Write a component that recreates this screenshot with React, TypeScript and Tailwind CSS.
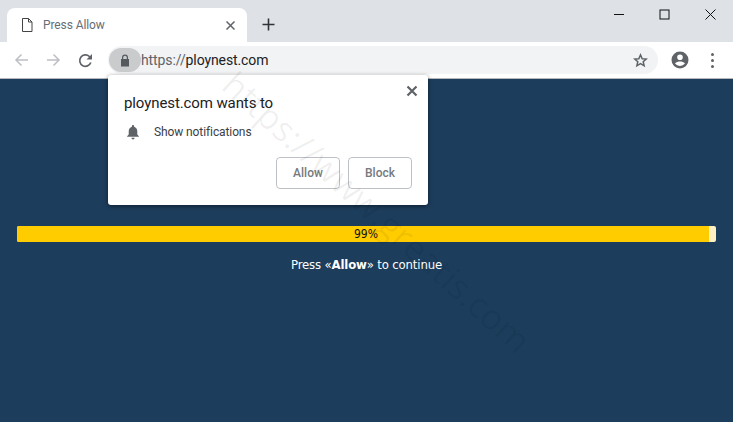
const bodyFont = 'font-["DejaVu_Sans_Condensed","DejaVu_Sans",sans-serif]';

const WinControls = () => (
  <div className="flex items-center gap-[35px] pr-[17px] pt-[8px] ml-auto self-start">
    <svg width="10" height="12" viewBox="0 0 10 12"><path d="M0 6.500h10" stroke="#111" strokeWidth="1" /></svg>
    <svg width="11" height="11" viewBox="0 0 11 11"><rect x="1" y="1" width="9" height="9" fill="none" stroke="#111" strokeWidth="1" /></svg>
    <svg width="11" height="11" viewBox="0 0 11 11"><path d="M.5.5l10 10M10.500.5l-10 10" stroke="#111" strokeWidth="1" /></svg>
  </div>
);

const Tab = () => (
  <div className="w-[240px] h-[34px] mt-[8px] ml-[7px] bg-white rounded-t-[8px] flex items-center pl-[14px] pr-[12px]">
    <svg width="12" height="14" viewBox="0 0 12 14" fill="none" stroke="#444" strokeWidth="1">
      <path d="M1.500.5h6l3.500 3.500v9.500h-9.500zM7.500.5v3.500h3.500" />
    </svg>
    <span className="ml-[10px] text-[12px] tracking-[-0.1px] text-[#666d75] font-['Roboto',sans-serif]">Press Allow</span>
    <svg className="ml-auto" width="9" height="9" viewBox="0 0 9 9"><path d="M.5.5l8 8M8.500.5l-8 8" stroke="#5f6368" strokeWidth="1.500" /></svg>
  </div>
);

export default function App() {
  return (
    <div className="relative w-[733px] h-[422px] overflow-hidden bg-[#1c3d5c] font-['Roboto',sans-serif]">
      {/* tab strip */}
      <div className="h-[42px] bg-[#dee1e6] flex">
        <Tab />
        <svg className="ml-[15px] mt-[18px]" width="13" height="13" viewBox="0 0 13 13"><path d="M6.500.5v12M.5 6.500h12" stroke="#2f3438" strokeWidth="1.600" /></svg>
        <WinControls />
      </div>

      {/* toolbar */}
      <div className="h-[36px] bg-white border-b border-b-[#b5b7ba] flex items-center pl-[14px] box-content">
        <svg width="15" height="14" viewBox="0 0 15 14" fill="none" stroke="#bdbfc2" strokeWidth="1.500"><path d="M14 7H2M7.500 1.500L2 7l5.500 5.500" /></svg>
        <svg className="ml-[17px]" width="15" height="14" viewBox="0 0 15 14" fill="none" stroke="#bdbfc2" strokeWidth="1.500"><path d="M1 7h12M7.500 1.500L13 7l-5.500 5.500" /></svg>
        <svg className="ml-[17px]" width="15" height="15" viewBox="0 0 15 15" fill="none"><path d="M12.800 9.500A5.700 5.700 0 1 1 11.400 3.500L13 5" stroke="#5f6368" strokeWidth="1.700" /><path d="M14 1v5.500H8.500z" fill="#5f6368" /></svg>
        <div className="ml-[15px] w-[550px] h-[28px] rounded-full bg-[#f1f3f4] flex items-center pr-[10px]">
          <div className="w-[32px] h-[24px] ml-px rounded-full bg-[#c9cbcd] flex items-center justify-center">
            <svg width="10" height="13" viewBox="0 0 10 13"><path d="M2 5V3.500a3 3 0 0 1 6 0V5h1v7.500H1V5zM3.200 5h3.600V3.500a1.800 1.800 0 0 0-3.600 0z" fill="#55595d" fillRule="evenodd" /></svg>
          </div>
          <span className="text-[14px] tracking-[-0.1px] text-[#5f6368]">https://<span className="text-[#202124]">ploynest.com</span></span>
          <svg className="ml-auto" width="15" height="15" viewBox="0 0 24 24" fill="none" stroke="#5f6368" strokeWidth="2.400"><path d="M12 3l2.700 6.100 6.500.6-4.900 4.300 1.500 6.500L12 17.100l-5.800 3.400 1.500-6.500L2.800 9.700l6.500-.6z" /></svg>
        </div>
        <svg className="ml-[13px]" width="18" height="18" viewBox="0 0 18 18"><path d="M9 .5a8.500 8.500 0 1 0 0 17 8.500 8.500 0 0 0 0-17zM9 3.500a2.800 2.800 0 1 1 0 5.600 2.800 2.800 0 0 1 0-5.600zM9 15a6.300 6.300 0 0 1-5-2.500c1.200-1.400 3.200-2 5-2s3.800.6 5 2A6.300 6.300 0 0 1 9 15z" fill="#5f6368" fillRule="evenodd" /></svg>
        <div className="ml-[22px] flex flex-col gap-[3px]">
          <span className="w-[3px] h-[3px] rounded-full bg-[#5f6368]" />
          <span className="w-[3px] h-[3px] rounded-full bg-[#5f6368]" />
          <span className="w-[3px] h-[3px] rounded-full bg-[#5f6368]" />
        </div>
      </div>

      {/* page */}
      <div className="pt-[147px] px-[17px] text-center">
        <div className="h-[16px] rounded-[2px] bg-[#fff0c4] overflow-hidden">
          <div className={`h-full w-[99%] bg-[#ffcc00] text-[12px] leading-[16px] text-[#111] pl-[6px] ${bodyFont}`}>99%</div>
        </div>
        <p className={`mt-[15px] text-[13px] leading-[16px] tracking-[-0.15px] text-white ${bodyFont}`}>
          Press «<b>Allow</b>» to continue
        </p>
      </div>

      {/* permission popup */}
      <div className="absolute left-[108px] top-[75px] w-[320px] h-[130px] bg-white rounded-[3px] shadow-[0_1px_4px_rgba(0,0,0,0.5)] px-[16px] pt-[19px]">
        <svg className="absolute right-[10px] top-[10px]" width="12" height="12" viewBox="0 0 12 12"><path d="M1.500 1.500l9 9M10.500 1.500l-9 9" stroke="#5f6368" strokeWidth="2.200" /></svg>
        <div className="text-[15px] leading-[18px] tracking-[-0.1px] text-[#202124]">ploynest.com wants to</div>
        <div className="mt-[13px] flex items-center h-[14px]">
          <svg className="ml-[2px]" width="14" height="15" viewBox="0 0 13 14"><path d="M6.500 0c.6 0 1 .4 1 1v.6c2 .5 3 2.200 3 4.200v3l1.500 1.700v.5H1v-.5l1.500-1.700v-3c0-2 1-3.700 3-4.200V1c0-.6.400-1 1-1zM5 12h3a1.500 1.500 0 0 1-3 0z" fill="#5f6368" /></svg>
          <span className="ml-[14px] text-[12px] tracking-[-0.1px] text-[#3c4043]">Show notifications</span>
        </div>
        <div className="flex justify-end gap-[8px] mt-[18px]">
          <button className="w-[64px] h-[32px] rounded-[4px] border border-[#bdc1c6] text-[12px] font-medium text-[#757a80]">Allow</button>
          <button className="w-[64px] h-[32px] rounded-[4px] border border-[#bdc1c6] text-[12px] font-medium text-[#757a80]">Block</button>
        </div>
      </div>

      {/* watermark */}
      <div className="absolute left-[172px] top-[190px] w-[410px] text-center text-[35px] leading-[44px] whitespace-nowrap rotate-[42deg] pointer-events-none text-black/[0.06] font-['Open_Sans',sans-serif]">
        https://www.greatis.com
      </div>
    </div>
  );
}
